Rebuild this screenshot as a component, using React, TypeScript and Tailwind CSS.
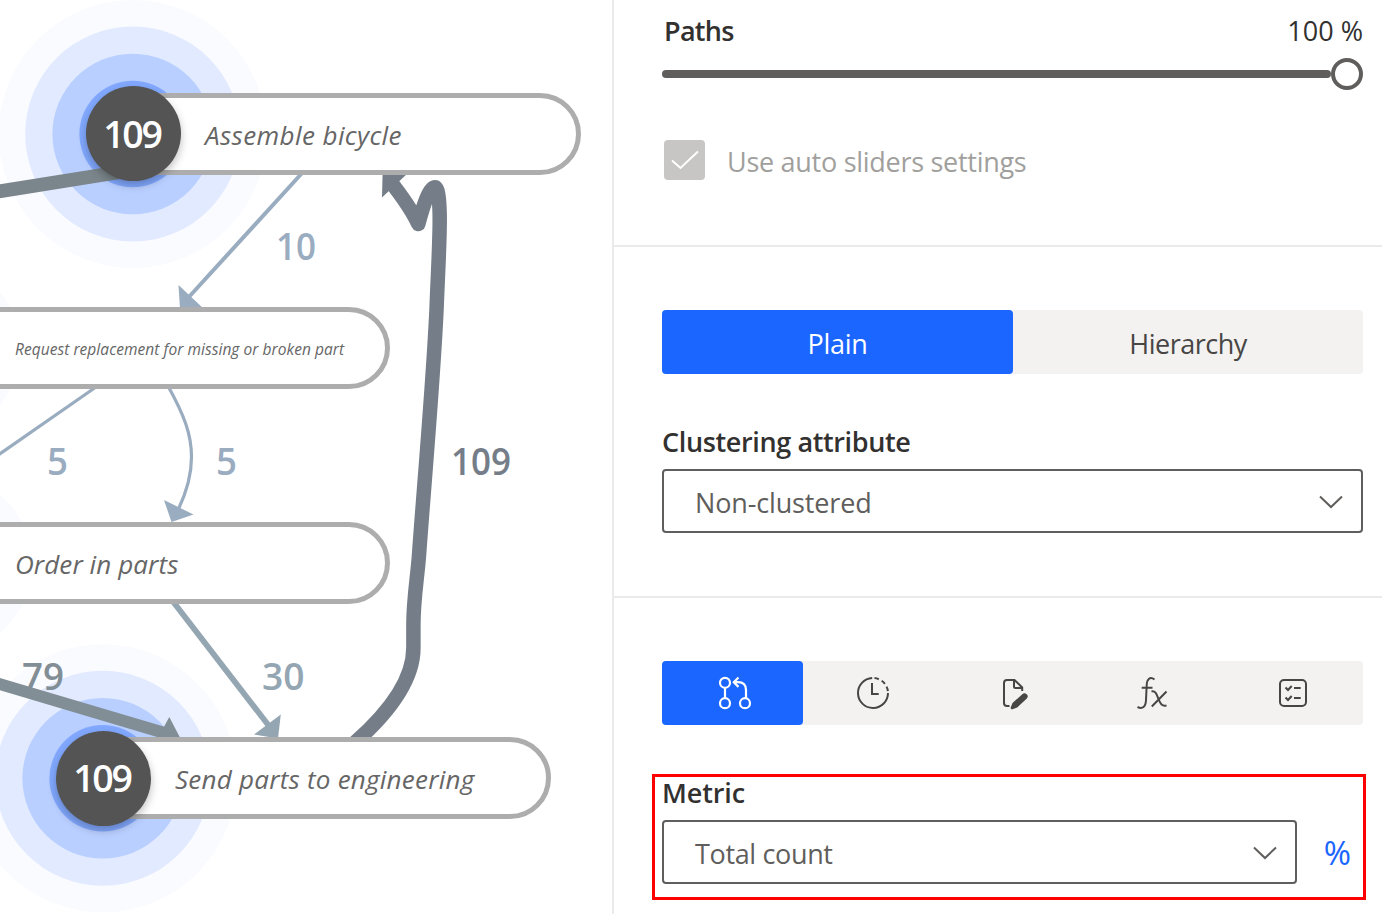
import type { ReactNode } from "react";

const FONT = "font-['Open_Sans','Noto_Sans',sans-serif]";

function Halo({ x, y }: { x: number; y: number }) {
  return (
    <g>
      <circle cx={x} cy={y} r={134} fill="#fafbff" />
      <circle cx={x} cy={y} r={107.5} fill="#e2eaff" />
      <circle cx={x} cy={y} r={80.3} fill="#b9cfff" />
      <circle cx={x} cy={y} r={53.3} fill="#82a9ff" />
    </g>
  );
}

function EdgeLabel({ x, y, w, fill, children }: { x: number; y: number; w: number; fill: string; children: string }) {
  return (
    <text x={x} y={y} textLength={w} lengthAdjust="spacingAndGlyphs" fill={fill} className="text-[37.5px] font-semibold">
      {children}
    </text>
  );
}

function Edges() {
  return (
    <svg className="absolute inset-0" width="612" height="914" viewBox="0 0 612 914" fill="none">
      <circle cx="-70" cy="348.5" r="90" fill="#fafbff" />
      <circle cx="-58" cy="563.5" r="90" fill="#fafbff" />
      <Halo x={132.7} y={134} />
      <Halo x={102.7} y={778.3} />

      <path d="M-5 192.1L133 170" stroke="#7b868c" strokeWidth="13.8" />

      <path d="M303 172L188 298" stroke="#9aacbf" strokeWidth="4" />
      <path d="M178.5 285L204 309H180Z" fill="#9aacbf" />

      <path d="M96 387L-4 456.5" stroke="#9aacbf" strokeWidth="3.2" />

      <path d="M168 386C184 415 191.5 434 191.5 457C191.5 475 187 491 178.5 509" stroke="#9aacbf" strokeWidth="3.2" />
      <path d="M164 500L193.5 514.5L171.5 522Z" fill="#9aacbf" />

      <path d="M173 601.5L269 726" stroke="#95a6b3" strokeWidth="5.8" />
      <path d="M280.8 714.5L254 734.5L278 738.5Z" fill="#95a6b3" />

      <path d="M-4 682.9L168 734" stroke="#828e96" strokeWidth="11.8" />
      <path d="M169.3 717L181 739.5H157Z" fill="#828e96" />

      <path
        d="M351 746L355 742.5C385 716 413.4 682 413.4 648V625C413.4 600 417 580 418.8 558C424 485 433 385 436.5 310C438 270 440 240 439.7 215C439.3 198 438 187.3 435 187.3C429.5 187.3 424 203 418.3 224C411 208 401 195 390 181"
        stroke="#757e88"
        strokeWidth="14.5"
        strokeLinejoin="round"
      />
      <path d="M382.6 173L408 173L382 197.5Z" fill="#757e88" />

      <EdgeLabel x={276} y={260} w={40} fill="#9aacbf">10</EdgeLabel>
      <EdgeLabel x={47} y={474.5} w={21} fill="#9aacbf">5</EdgeLabel>
      <EdgeLabel x={216} y={474.5} w={21} fill="#9aacbf">5</EdgeLabel>
      <EdgeLabel x={451} y={474.5} w={60} fill="#757e88">109</EdgeLabel>
      <EdgeLabel x={22} y={689.5} w={42} fill="#828e96">79</EdgeLabel>
      <EdgeLabel x={262} y={689.5} w={42.5} fill="#95a6b3">30</EdgeLabel>
    </svg>
  );
}

function Node({ className, children }: { className: string; children: ReactNode }) {
  return (
    <div
      className={`absolute flex h-[82px] items-center rounded-full border-[5px] border-[#adadad] bg-white whitespace-nowrap text-[#666] italic ${className}`}
    >
      {children}
    </div>
  );
}

function Badge({ className }: { className: string }) {
  return (
    <div
      className={`absolute flex size-[95px] items-center justify-center rounded-full bg-[#545454] pt-px pr-[3px] text-[37.5px] font-semibold tracking-[-2.2px] text-white shadow-[0_4px_9px_rgba(0,0,0,0.25)] ${className}`}
    >
      109
    </div>
  );
}

function Chevron() {
  return (
    <svg className="mt-0.5" width="24" height="14" viewBox="0 0 24 14" fill="none" stroke="#605e5c" strokeWidth="2">
      <path d="M1 1.5L12 12L23 1.5" />
    </svg>
  );
}

function Select({ value, className }: { value: ReactNode; className: string }) {
  return (
    <div className={`flex h-16 items-center justify-between rounded border-2 border-[#605e5c] pr-[18px] pl-[31px] text-[#605e5c] ${className}`}>
      <span className="pt-1">{value}</span>
      <Chevron />
    </div>
  );
}

function TabIcon({ children }: { children: ReactNode }) {
  return (
    <svg width="40" height="40" viewBox="0 0 40 40" fill="none" stroke="currentColor" strokeWidth="2">
      {children}
    </svg>
  );
}

export default function App() {
  return (
    <div className={`flex h-[914px] w-[1382px] overflow-hidden bg-white ${FONT}`}>
      <main className="relative w-[612px] shrink-0 overflow-hidden">
        <Edges />
        <Node className="top-[92.5px] left-[93px] w-[488px] pt-[3px] pl-[107px] text-[26px]">
          <span className="tracking-[0.4px]">Assemble bicycle</span>
        </Node>
        <Node className="top-[307px] left-[-100px] w-[490px] pt-[4px] pl-[110px] text-[15.5px]">
          <span className="tracking-[0.05px]">Request replacement for missing or broken part</span>
        </Node>
        <Node className="top-[522px] left-[-100px] w-[490px] pt-[2px] pl-[110px] text-[26px]">
          <span className="tracking-[0.1px]">Order in parts</span>
        </Node>
        <Node className="top-[737px] left-[63px] w-[488px] pt-[2px] pl-[107px] text-[26px]">
          <span className="tracking-[0.24px]">Send parts to engineering</span>
        </Node>
        <Badge className="top-[86px] left-[86px]" />
        <Badge className="top-[730.5px] left-[56px]" />
      </main>

      <aside className="flex w-[770px] flex-col border-l-2 border-[#eaeaea] text-[27px] leading-9 text-[#323130]">
        <section className="h-[247px] shrink-0 border-b-2 border-[#eaeaea] pt-[13px] pr-[19px] pl-12">
          <div className="flex justify-between pl-0.5">
            <span className="font-semibold tracking-[-0.7px]">Paths</span>
            <span>100 %</span>
          </div>
          <div className="mt-[9px] flex items-center">
            <div className="h-2 flex-1 rounded-full bg-[#605e5c]" />
            <div className="size-8 rounded-full border-4 border-[#605e5c] bg-white" />
          </div>
          <div className="mt-[50px] flex items-center pl-0.5 text-[#a19f9d]">
            <div className="flex h-10 w-[41px] items-center justify-center rounded bg-[#c8c6c4]">
              <svg width="28" height="20" viewBox="0 0 28 20" fill="none" stroke="#fff" strokeWidth="2">
                <path d="M1 10.5L9.5 18L27 1.5" />
              </svg>
            </div>
            <span className="pt-1 pl-[22px] tracking-[-0.28px]">Use auto sliders settings</span>
          </div>
        </section>

        <section className="h-[351px] shrink-0 border-b-2 border-[#eaeaea] pt-[63px] pr-[19px] pl-12">
          <div className="flex h-16 rounded bg-[#f3f2f1] text-[#484644]">
            <div className="flex w-[351px] items-center justify-center rounded bg-[#1a66ff] pt-1 tracking-[-0.3px] text-white">Plain</div>
            <div className="flex flex-1 items-center justify-center pt-1 tracking-[-0.5px]">Hierarchy</div>
          </div>
          <div className="mt-[50px] font-semibold tracking-[-0.37px]">Clustering attribute</div>
          <Select value={<span className="tracking-[-0.15px]">Non-clustered</span>} className="mt-[9px]" />
        </section>

        <section className="flex-1 pt-[63px] pr-4 pl-[38px]">
          <div className="mr-[3px] ml-2.5 flex h-16 rounded bg-[#f3f2f1] text-[#484644]">
            <div className="flex w-[141px] items-center justify-center rounded bg-[#1a66ff] pr-px text-white">
              <TabIcon>
                <g strokeWidth="2.2">
                  <circle cx="13" cy="9.8" r="5" />
                  <circle cx="13" cy="30.2" r="5" />
                  <circle cx="33" cy="30.2" r="5" />
                  <path d="M13 15V25M34 25V17Q34 9.2 26 9.2H22M26.500 4.500L21.800 9.200L26.500 13.900" />
                </g>
              </TabIcon>
            </div>
            <div className="flex flex-1 items-center justify-center">
              <TabIcon>
                <path d="M19.2 5A15 15 0 1 0 35 20" />
                <path d="M21.5 5.1A15 15 0 0 1 35 20" strokeDasharray="4.5 3.2" />
                <path d="M19 10V21H25.7" />
              </TabIcon>
            </div>
            <div className="flex flex-1 items-center justify-center">
              <TabIcon>
                <path d="M16.500 33H14A3 3 0 0 1 11 30V10A3 3 0 0 1 14 7H21.500L29.200 14.500V18" />
                <path d="M21 7V13.500A1.500 1.500 0 0 0 22.500 15H29" />
                <path d="M17.900 34L19.500 30L29.300 21.300A3 3 0 0 1 33.800 25.500L24.200 34.600L19.500 36.300A1.500 1.500 0 0 1 17.900 34Z" fill="currentColor" stroke="none" />
              </TabIcon>
            </div>
            <div className="flex flex-1 items-center justify-center">
              <TabIcon>
                <path d="M21.500 6.500C17 3.200 14 6 13.700 12L13 27C12.700 34 9.500 36.500 4.500 34M8.700 14.700H19.500" />
                <path d="M18.500 18.500C22.500 17.500 23.500 21 25.500 26C27.500 31 29 33.500 33.500 32.500M33.500 18.500L18.800 33.500" />
              </TabIcon>
            </div>
            <div className="flex flex-1 items-center justify-center">
              <TabIcon>
                <rect x="7" y="7" width="26" height="26" rx="4" />
                <path d="M12.500 14.500L15 17L18.700 13M21 15H27.700M12.500 24.500L15 27L18.700 23M21 25H27.700" />
              </TabIcon>
            </div>
          </div>
          <div className="mt-[49px] h-[126px] border-[3px] border-[#f00] pl-[7px]">
            <div className="-mt-0.5 font-semibold tracking-[-0.1px]">Metric</div>
            <div className="mt-[9px] flex items-center">
              <Select value={<span className="tracking-[-0.35px]">Total count</span>} className="w-[635px]" />
              <span className="flex-1 pt-0.5 pl-[15px] text-center text-[33px] text-[#1a66ff]">%</span>
            </div>
          </div>
        </section>
      </aside>
    </div>
  );
}
